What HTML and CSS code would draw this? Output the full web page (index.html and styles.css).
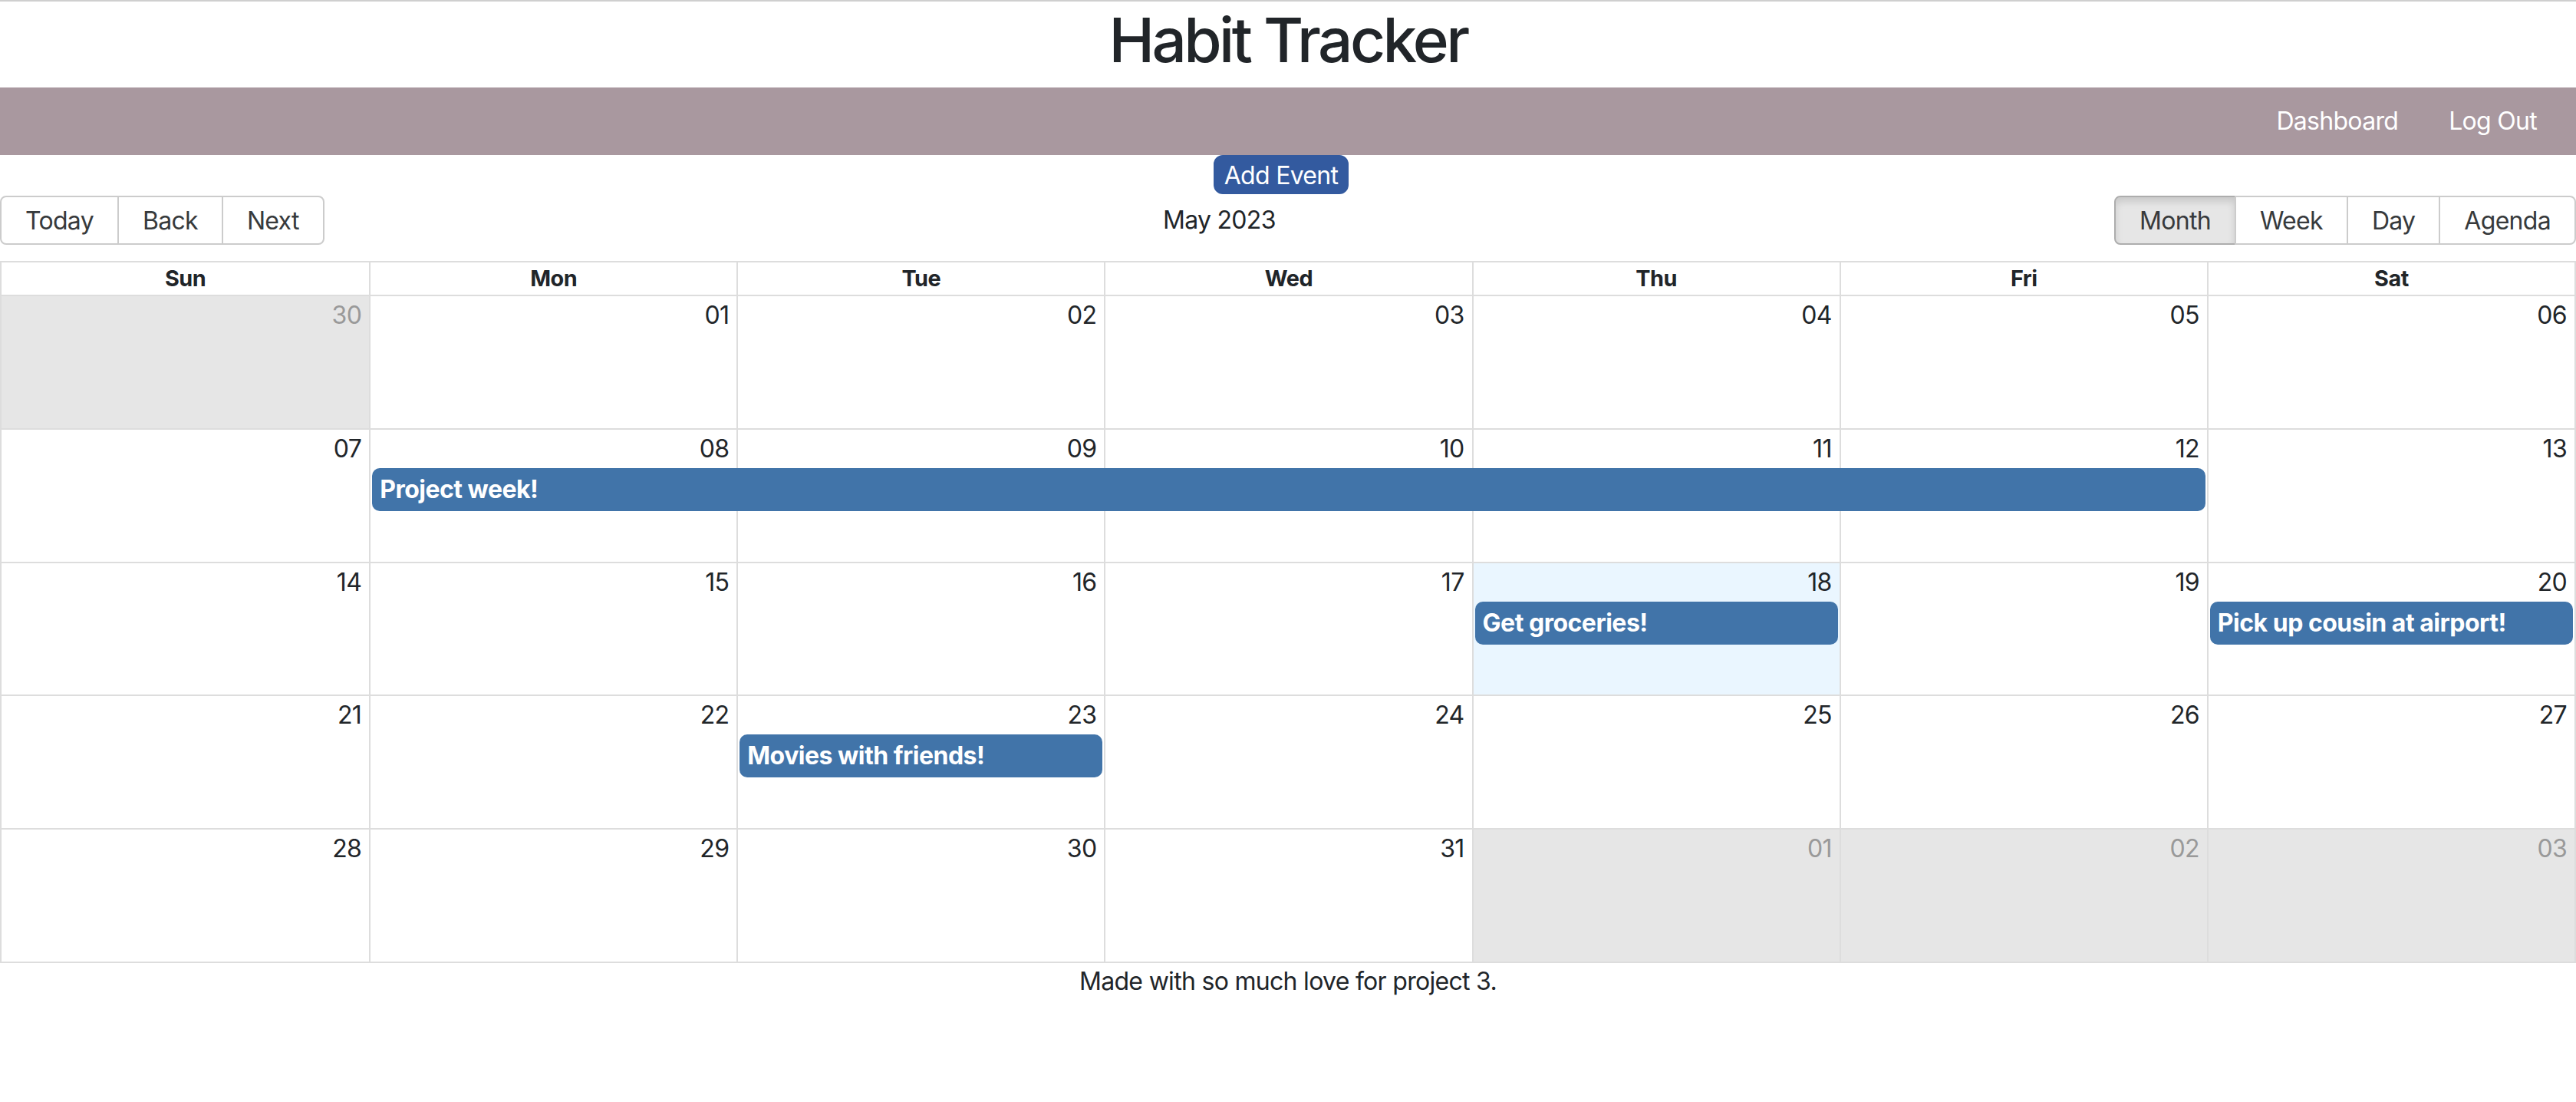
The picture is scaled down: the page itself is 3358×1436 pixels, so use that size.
FILE: index.html
```html
<!DOCTYPE html>
<html lang="en">
<head>
<meta charset="utf-8">
<title>Habit Tracker</title>
<link rel="stylesheet" href="styles.css">
</head>
<body>
<div class="page">
  <header class="site-header">
    <h1 class="title">Habit Tracker</h1>
  </header>
  <nav class="navbar">
    <a class="nav-link" href="#">Dashboard</a>
    <a class="nav-link" href="#">Log Out</a>
  </nav>
  <div class="add-wrap">
    <button class="btn-add">Add Event</button>
  </div>
  <div class="calendar">
    <div class="toolbar">
      <div class="btn-group">
        <button class="tb-btn">Today</button>
        <button class="tb-btn">Back</button>
        <button class="tb-btn">Next</button>
      </div>
      <span class="tb-label">May 2023</span>
      <div class="btn-group">
        <button class="tb-btn active">Month</button>
        <button class="tb-btn">Week</button>
        <button class="tb-btn">Day</button>
        <button class="tb-btn">Agenda</button>
      </div>
    </div>
    <div class="month">
      <div class="month-header">
        <div class="hcell">Sun</div>
        <div class="hcell">Mon</div>
        <div class="hcell">Tue</div>
        <div class="hcell">Wed</div>
        <div class="hcell">Thu</div>
        <div class="hcell">Fri</div>
        <div class="hcell">Sat</div>
      </div>

      <div class="week">
        <div class="bg c1 off"></div><div class="bg c2"></div><div class="bg c3"></div><div class="bg c4"></div><div class="bg c5"></div><div class="bg c6"></div><div class="bg c7"></div>
        <div class="date c1 off-text">30</div><div class="date c2">01</div><div class="date c3">02</div><div class="date c4">03</div><div class="date c5">04</div><div class="date c6">05</div><div class="date c7">06</div>
      </div>

      <div class="week">
        <div class="bg c1"></div><div class="bg c2"></div><div class="bg c3"></div><div class="bg c4"></div><div class="bg c5"></div><div class="bg c6"></div><div class="bg c7"></div>
        <div class="date c1">07</div><div class="date c2">08</div><div class="date c3">09</div><div class="date c4">10</div><div class="date c5">11</div><div class="date c6">12</div><div class="date c7">13</div>
        <div class="event span-2-6">Project week!</div>
      </div>

      <div class="week">
        <div class="bg c1"></div><div class="bg c2"></div><div class="bg c3"></div><div class="bg c4"></div><div class="bg c5 today"></div><div class="bg c6"></div><div class="bg c7"></div>
        <div class="date c1">14</div><div class="date c2">15</div><div class="date c3">16</div><div class="date c4">17</div><div class="date c5">18</div><div class="date c6">19</div><div class="date c7">20</div>
        <div class="event ev c5">Get groceries!</div>
        <div class="event ev c7">Pick up cousin at airport!</div>
      </div>

      <div class="week">
        <div class="bg c1"></div><div class="bg c2"></div><div class="bg c3"></div><div class="bg c4"></div><div class="bg c5"></div><div class="bg c6"></div><div class="bg c7"></div>
        <div class="date c1">21</div><div class="date c2">22</div><div class="date c3">23</div><div class="date c4">24</div><div class="date c5">25</div><div class="date c6">26</div><div class="date c7">27</div>
        <div class="event ev c3">Movies with friends!</div>
      </div>

      <div class="week">
        <div class="bg c1"></div><div class="bg c2"></div><div class="bg c3"></div><div class="bg c4"></div><div class="bg c5 off"></div><div class="bg c6 off"></div><div class="bg c7 off"></div>
        <div class="date c1">28</div><div class="date c2">29</div><div class="date c3">30</div><div class="date c4">31</div><div class="date c5 off-text">01</div><div class="date c6 off-text">02</div><div class="date c7 off-text">03</div>
      </div>
    </div>
  </div>
  <footer class="footer">Made with so much love for project 3.</footer>
</div>
</body>
</html>
```
FILE: styles.css
```css
* { box-sizing: border-box; }
html, body { margin: 0; padding: 0; background: #fff; }
body {
  font-family: Inter, "Noto Sans", "Liberation Sans", sans-serif;
  font-size: 32px;
  line-height: 1.5;
  letter-spacing: -0.7px;
  color: #212529;
}
.page { border-top: 2px solid #cfcfcf; }

.site-header { height: 112px; padding-top: 2px; }
.title {
  margin: 0;
  text-align: center;
  font-size: 80px;
  line-height: 96px;
  font-weight: 500;
  letter-spacing: -3.6px;
  color: #212529;
}

.navbar {
  height: 88px;
  background: #a9989f;
  display: flex;
  justify-content: flex-end;
  align-items: center;
  gap: 32px;
  padding-right: 34px;
}
.nav-link {
  color: #fff;
  text-decoration: none;
  padding: 0 17px;
  font-size: 32px;
}

.add-wrap { display: flex; justify-content: center; padding-right: 18px; height: 53px; }
.btn-add {
  font-family: inherit;
  font-size: 32px;
  letter-spacing: -0.7px;
  line-height: 43px;
  color: #fff;
  background: #335a9f;
  border: 2px solid #335a9f;
  border-radius: 12px;
  padding: 3px 12px 1px;
  height: 51px;
}

.calendar { height: 1000px; display: flex; flex-direction: column; }

.toolbar {
  display: flex;
  align-items: center;
  margin-bottom: 21px;
  height: 64px;
}
.tb-label { flex: 1; text-align: center; padding: 0 20px; }
.btn-group { display: flex; }
.tb-btn {
  font-family: inherit;
  font-size: 32px;
  letter-spacing: -0.7px;
  line-height: 38px;
  color: #373a3c;
  background: #fff;
  border: 2px solid #ccc;
  padding: 12px 31px 10px;
  margin: 0;
  height: 64px;
  border-radius: 0;
}
.tb-btn + .tb-btn { margin-left: -2px; }
.tb-btn:first-child { border-radius: 8px 0 0 8px; }
.tb-btn:last-child { border-radius: 0 8px 8px 0; }
.tb-btn.active {
  background: #e6e6e6;
  border-color: #adadad;
  box-shadow: inset 0 6px 10px rgba(0,0,0,.125);
}

.month {
  flex: 1;
  display: flex;
  flex-direction: column;
  border: 2px solid #ddd;
  min-height: 0;
}
.month-header {
  display: grid;
  grid-template-columns: repeat(7, 1fr);
  border-bottom: 2px solid #ddd;
}
.hcell {
  height: 42px;
  line-height: 42px;
  text-align: center;
  font-weight: 700;
  font-size: 28.8px;
  letter-spacing: -0.5px;
  border-left: 2px solid #ddd;
}
.hcell:first-child { border-left: none; }

.week {
  flex: 1;
  min-height: 0;
  display: grid;
  grid-template-columns: repeat(7, 1fr);
  grid-template-rows: 50px auto 1fr;
}
.week + .week { border-top: 2px solid #ddd; }

.bg { grid-row: 1 / -1; border-left: 2px solid #ddd; }
.bg.c1 { border-left: none; }
.bg.off { background: #e6e6e6; }
.bg.today { background: #eaf6ff; }

.c1 { grid-column: 1; }
.c2 { grid-column: 2; }
.c3 { grid-column: 3; }
.c4 { grid-column: 4; }
.c5 { grid-column: 5; }
.c6 { grid-column: 6; }
.c7 { grid-column: 7; }

.date {
  grid-row: 1;
  text-align: right;
  padding-right: 10px;
  padding-top: 1px;
  line-height: 48px;
  font-size: 32px;
  color: #212529;
}
.date.off-text { color: #999; }

.event {
  grid-row: 2;
  margin: 0 2px 2px 4px;
  padding: 4px 10px;
  background: #4174a9;
  color: #fff;
  font-weight: 700;
  letter-spacing: -0.5px;
  border-radius: 10px;
  line-height: 48px;
  white-space: nowrap;
  overflow: hidden;
}
.span-2-6 { grid-column: 2 / 7; }

.footer {
  text-align: center;
  line-height: 38px;
  padding-top: 5px;
}
```
